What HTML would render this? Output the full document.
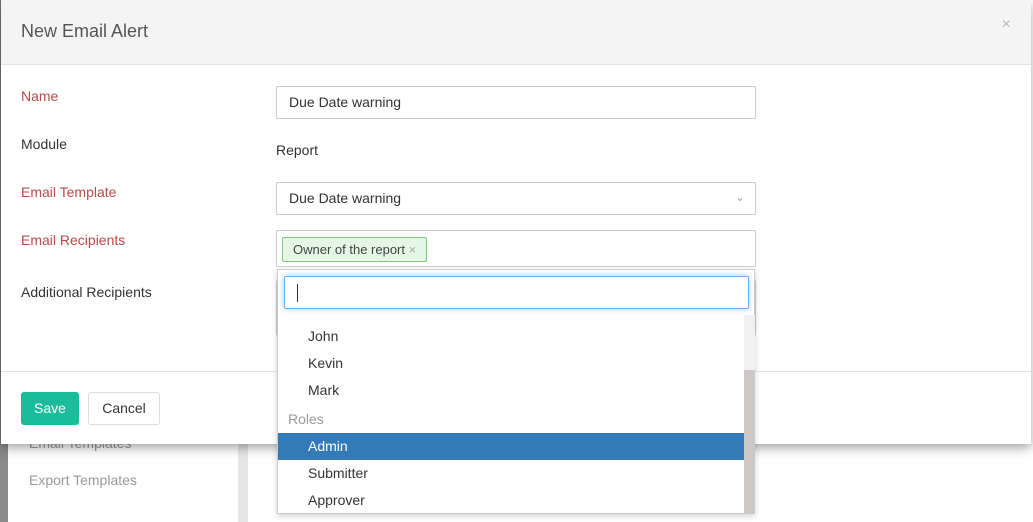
<!DOCTYPE html>
<html><head><style>
*{box-sizing:border-box;margin:0;padding:0}
body{width:1033px;height:522px;overflow:hidden;background:#fff;font-family:"Liberation Sans",sans-serif;position:relative;font-size:14px;color:#333}
.abs{position:absolute}
.lbl{position:absolute;left:21px;font-size:14px}
.red{color:#b94a48}
.inp{position:absolute;left:276px;width:480px;border:1px solid #ccc;border-radius:2px;background:#fff;padding-left:12px;font-size:14px;color:#333}
.item{position:absolute;left:0;width:466px;height:27px;line-height:27px;padding-left:30px;font-size:14px;color:#333}
</style></head><body>
<div class="abs" style="left:0;top:440px;width:8px;height:82px;background:#8a8a8a"></div>
<div class="abs" style="left:8px;top:440px;width:230px;height:82px;background:#fff"></div>
<div class="abs" style="left:238px;top:440px;width:10px;height:82px;background:#e6e6e6"></div>
<div class="abs" style="left:29px;top:435px;color:#999;font-size:14px">Email Templates</div>
<div class="abs" style="left:29px;top:472px;color:#999;font-size:14px">Export Templates</div>
<div class="abs" style="left:0;top:0;width:1px;height:444px;background:#777"></div>
<div class="abs" style="left:1px;top:0;width:1030px;height:444px;background:#fff;box-shadow:0 4px 10px rgba(0,0,0,.35)">
 <div style="height:65px;background:#f4f4f4;border-bottom:1px solid #e5e5e5;position:relative">
  <div class="abs" style="left:20px;top:21px;font-size:18px;color:#555">New Email Alert</div>
  <div class="abs" style="right:20px;top:16px;font-size:16px;color:#bbb">×</div>
 </div>
 <div class="abs" style="left:0;top:371px;width:1030px;height:1px;background:#e5e5e5"></div>
 <div class="abs" style="left:20px;top:392px;width:58px;height:33px;background:#1abc9c;border-radius:3px;color:#fff;text-align:center;line-height:33px">Save</div>
 <div class="abs" style="left:87px;top:392px;width:72px;height:33px;border:1px solid #ddd;border-radius:3px;color:#333;text-align:center;line-height:31px">Cancel</div>
</div>
<div class="lbl red" style="top:88px">Name</div>
<div class="lbl" style="top:136px">Module</div>
<div class="lbl red" style="top:184px">Email Template</div>
<div class="lbl red" style="top:232px">Email Recipients</div>
<div class="lbl" style="top:284px">Additional Recipients</div>
<div class="inp" style="top:86px;height:33px;line-height:31px">Due Date warning</div>
<div class="abs" style="left:276px;top:142px">Report</div>
<div class="inp" style="top:182px;height:33px;line-height:31px">Due Date warning<span style="position:absolute;right:10px;top:-1px;color:#aaa;font-size:12px">&#8964;</span></div>
<div class="inp" style="top:230px;height:37px;padding-left:5px">
 <div class="abs" style="left:5px;top:6px;height:25px;padding:0 10px;background:#e4f7e4;border:1px solid #7ccc7c;border-radius:2px;font-size:13px;line-height:23px;color:#444">Owner of the report <span style="color:#aaa">×</span></div>
</div>
<div class="inp" style="top:280px;height:56px"></div>
<div class="abs" style="left:277px;top:269px;width:478px;height:245px;background:#fff;border:1px solid #ccc;box-shadow:0 2px 6px rgba(0,0,0,.18)">
 <div class="abs" style="left:6px;top:6px;width:465px;height:33px;border:1px solid #66afe9;border-radius:2px;box-shadow:0 0 6px rgba(102,175,233,.6)">
  <div class="abs" style="left:12px;top:7px;width:1px;height:18px;background:#333"></div>
 </div>
 <div class="abs" style="left:466px;top:45px;width:11px;height:55px;background:#f1f1f1"></div>
 <div class="abs" style="left:466px;top:100px;width:11px;height:144px;background:#cdc8c8"></div>
 <div class="item" style="top:53px">John</div>
 <div class="item" style="top:80px">Kevin</div>
 <div class="item" style="top:107px">Mark</div>
 <div class="item" style="top:136px;padding-left:10px;color:#999">Roles</div>
 <div class="item" style="top:163px;background:#337ab7;color:#fff">Admin</div>
 <div class="item" style="top:190px">Submitter</div>
 <div class="item" style="top:217px">Approver</div>
</div>
</body></html>
